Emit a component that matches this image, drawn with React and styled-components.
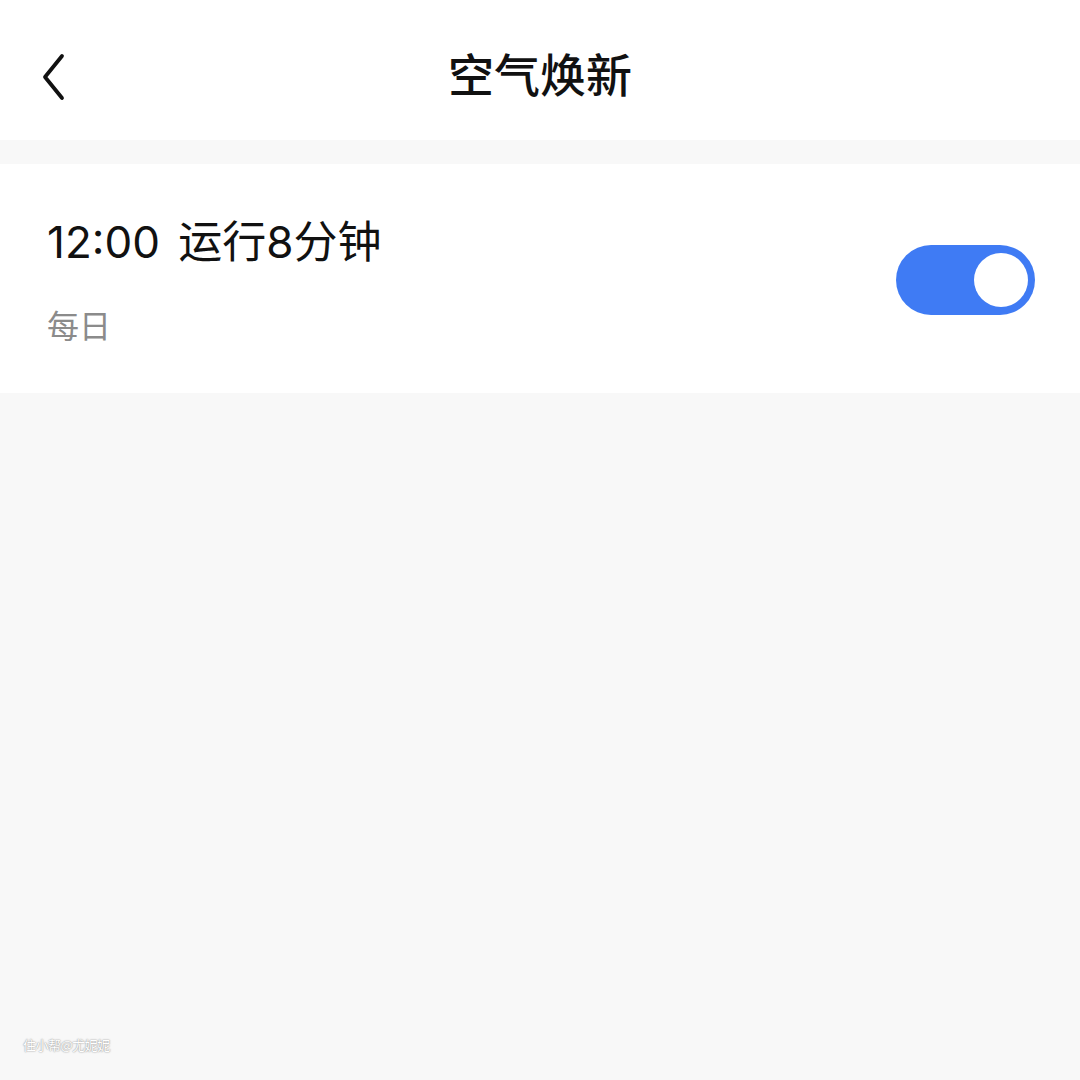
import React from "react";
import styled, { createGlobalStyle } from "styled-components";

const Global = createGlobalStyle`
  html, body { margin: 0; padding: 0; background: #f8f8f8; }
  body { font-family: Inter, "Noto Sans CJK SC", "Noto Sans", sans-serif; }
`;

const Page = styled.div`
  width: 1080px;
  height: 1080px;
  background: #f8f8f8;
  display: flex;
  flex-direction: column;
  position: relative;
  overflow: hidden;
`;

const Header = styled.header`
  height: 140px;
  box-sizing: border-box;
  padding-top: 8px;
  background: #ffffff;
  display: grid;
  grid-template-columns: 140px 1fr 140px;
  align-items: center;
`;

const BackButton = styled.button`
  border: 0;
  background: transparent;
  padding: 6px 0 0 41px;
  height: 60px;
  display: flex;
  align-items: center;
  justify-content: flex-start;
  cursor: pointer;
`;

const Title = styled.h1`
  margin: 0;
  text-align: center;
  font-family: "Noto Sans CJK SC", sans-serif;
  font-size: 46px;
  font-weight: 500;
  color: #111;
  line-height: 1;
  padding-bottom: 4px;
`;

const Gap = styled.div`
  height: 24px;
`;

const Card = styled.section`
  background: #ffffff;
  height: 229px;
  padding: 0 45px 0 47px;
  display: flex;
  align-items: center;
  justify-content: space-between;
`;

const Texts = styled.div`
  display: flex;
  flex-direction: column;
  gap: 36px;
  padding-top: 2px;
`;

const RowTitle = styled.div`
  font-family: Inter, "Noto Sans CJK SC", sans-serif;
  font-size: 44px;
  word-spacing: 6px;
  color: #111;
  line-height: 1.2;
`;

const RowSub = styled.div`
  font-family: "Noto Sans CJK SC", sans-serif;
  font-size: 32px;
  color: #8b8b8b;
  line-height: 1.2;
`;

const Switch = styled.div`
  width: 139px;
  height: 70px;
  border-radius: 35px;
  background: ${(p) => (p.$on ? "#3f7bf4" : "#dcdcdc")};
  display: flex;
  align-items: center;
  justify-content: ${(p) => (p.$on ? "flex-end" : "flex-start")};
  padding: 0 7px;
  box-sizing: border-box;
  margin-top: 2px;
`;

const Knob = styled.div`
  width: 54px;
  height: 54px;
  border-radius: 50%;
  background: #fff;
`;

const Watermark = styled.div`
  position: absolute;
  left: 23px;
  bottom: 26px;
  font-family: "Noto Sans CJK SC", sans-serif;
  font-size: 13px;
  color: #ffffff;
  text-shadow: 0 0 2px #9a9a9a, 0 0 1px #9a9a9a;
  letter-spacing: -0.5px;
`;

export default function App() {
  return (
    <Page>
      <Global />
      <Header>
        <BackButton aria-label="返回">
          <svg width="26" height="48" viewBox="0 0 26 48">
            <path d="M21 3 L4 24 L21 45" fill="none" stroke="#111" strokeWidth="3.8" strokeLinecap="round" strokeLinejoin="round" />
          </svg>
        </BackButton>
        <Title>空气焕新</Title>
        <div />
      </Header>
      <Gap />
      <Card>
        <Texts>
          <RowTitle>12:00 运行8分钟</RowTitle>
          <RowSub>每日</RowSub>
        </Texts>
        <Switch $on>
          <Knob />
        </Switch>
      </Card>
      <Watermark>住小帮@尤妮妮</Watermark>
    </Page>
  );
}
